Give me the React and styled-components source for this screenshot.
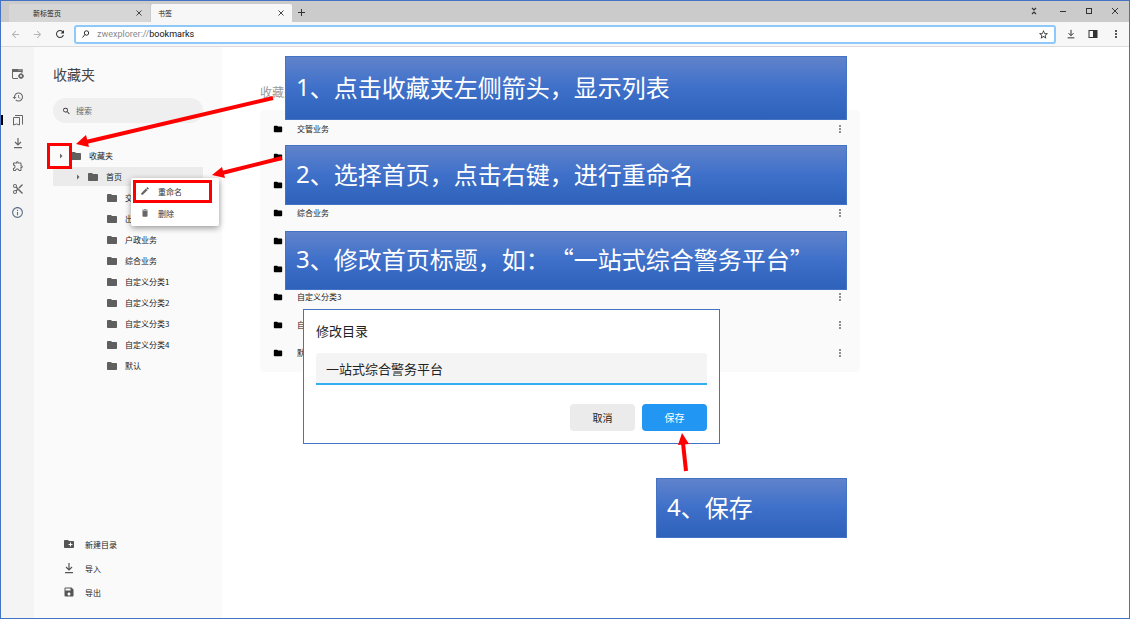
import React, { useState } from 'react';
import styled, { createGlobalStyle, css } from 'styled-components';
import {
  MdArrowBack,
  MdArrowForward,
  MdArrowRight,
  MdContentCut,
  MdCreateNewFolder,
  MdDelete,
  MdEdit,
  MdFolder,
  MdHistory,
  MdInfoOutline,
  MdMoreVert,
  MdOutlineExtension,
  MdRefresh,
  MdSave,
  MdSearch,
  MdStarBorder,
} from 'react-icons/md';

const folders = [
  '交管业务',
  '出入境业务',
  '户政业务',
  '综合业务',
  '自定义分类1',
  '自定义分类2',
  '自定义分类3',
  '自定义分类4',
  '默认',
];

const tree = [
  { name: '收藏夹', level: 0, open: true },
  { name: '首页', level: 1, open: true, selected: true },
  ...folders.map((name) => ({ name, level: 2 })),
];

const steps = [
  { no: '1', text: '、点击收藏夹左侧箭头，显示列表', x: 285, y: 56, w: 562, h: 64 },
  { no: '2', text: '、选择首页，点击右键，进行重命名', x: 285, y: 145, w: 562, h: 60 },
  { no: '3', text: '、修改首页标题，如：“一站式综合警务平台”', x: 285, y: 231, w: 562, h: 59 },
  { no: '4', text: '、保存', x: 656, y: 478, w: 191, h: 60 },
];

const DownloadIcon = ({ size = 12 }) => (
  <svg width={size} height={size} viewBox="0 0 12 12" fill="none" stroke="currentColor" strokeWidth="1.2">
    <path d="M6 1v7M3 5l3 3 3-3M2 10.6h8" />
  </svg>
);

const HomeIcon = () => (
  <svg width="12" height="12" viewBox="0 0 12 12" fill="none" stroke="currentColor">
    <path d="M6 10.5H1a.5.5 0 0 1-.5-.5V1.5h9.500V5" />
    <path d="M0 2.500h10.500" strokeWidth="3" />
    <path d="M6.500 2h1M8.500 2h1" stroke="#f4f4f4" />
    <circle cx="9" cy="8" r="1.800" strokeWidth="1.600" />
    <path d="M9 5v1M9 10v1M6 8h1M11 8h1" />
  </svg>
);

const BookmarksIcon = () => (
  <svg width="12" height="12" viewBox="0 0 12 12" fill="none" stroke="currentColor">
    <path d="M1.500 3.500h6v7.500l-3-1-3 1z" />
    <path d="M3 1.500h7.500v9" />
  </svg>
);

const PanelIcon = () => (
  <svg width="10" height="10" viewBox="0 0 10 10">
    <rect x="1" y="1.5" width="8" height="7" fill="none" stroke="currentColor" />
    <rect x="5" y="1.5" width="4" height="7" fill="currentColor" />
  </svg>
);

const CollapseIcon = () => (
  <svg width="8" height="8" viewBox="0 0 8 8" fill="none" stroke="currentColor" strokeWidth="1.2">
    <path d="M2 1l2 2 2-2M2 7l2-2 2 2" />
  </svg>
);

const KeyIcon = () => (
  <svg width="10" height="10" viewBox="0 0 10 10" fill="none" stroke="#333">
    <circle cx="5.5" cy="4" r="2.2" />
    <path d="M4 5.5L1.500 8.500" />
  </svg>
);

const CloseIcon = () => (
  <svg width="8" height="8" viewBox="0 0 8 8" stroke="currentColor" strokeWidth="0.9">
    <path d="M1.500 1.500l5 5M6.500 1.500l-5 5" />
  </svg>
);

const WindowIcon = ({ type }) => (
  <svg width="8" height="8" viewBox="0 0 8 8" fill="none" stroke="currentColor">
    {type === 'min' && <path d="M1 4.5h6" />}
    {type === 'max' && <rect x="1.5" y="1.5" width="5" height="5" />}
    {type === 'close' && <path d="M1 1l6 6M7 1L1 7" />}
  </svg>
);

const Arrows = () => (
  <ArrowLayer width="720" height="480" viewBox="0 0 720 480">
    <g stroke="#f00" strokeWidth="4">
      <path d="M273 98L86 142" />
      <path d="M282 158L222 173" />
      <path d="M686 471L683 443" />
    </g>
    <g fill="#f00">
      <path d="M76 144l10-9 3 12z" />
      <path d="M212 175l10-8 3 11z" />
      <path d="M682 433l-4 12 11-1z" />
    </g>
  </ArrowLayer>
);

export default function App() {
  const [title, setTitle] = useState('一站式综合警务平台');
  const [keyword, setKeyword] = useState('');

  return (
    <Page>
      <GlobalStyle />
      <Window>
        <TabBar>
          <Tab>
            <TabName $indent>新标签页</TabName>
            <IconButton aria-label="关闭标签">
              <CloseIcon />
            </IconButton>
          </Tab>
          <Tab $active>
            <TabName>书签</TabName>
            <IconButton aria-label="关闭标签">
              <CloseIcon />
            </IconButton>
          </Tab>
          <NewTab aria-label="新建标签">
            <svg width="8" height="8" viewBox="0 0 8 8" stroke="currentColor">
              <path d="M3.500 0v7M0 3.500h7" />
            </svg>
          </NewTab>
          <WindowButtons>
            <IconButton aria-label="收起">
              <CollapseIcon />
            </IconButton>
            <IconButton aria-label="最小化">
              <WindowIcon type="min" />
            </IconButton>
            <IconButton aria-label="最大化">
              <WindowIcon type="max" />
            </IconButton>
            <IconButton aria-label="关闭">
              <WindowIcon type="close" />
            </IconButton>
          </WindowButtons>
        </TabBar>

        <Toolbar>
          <NavButtons>
            <IconButton aria-label="后退" disabled>
              <MdArrowBack size={11} />
            </IconButton>
            <IconButton aria-label="前进" disabled>
              <MdArrowForward size={11} />
            </IconButton>
            <IconButton aria-label="刷新">
              <MdRefresh size={12} stroke="currentColor" />
            </IconButton>
          </NavButtons>
          <AddressBar>
            <KeyIcon />
            <Address>
              <span>zwexplorer://</span>bookmarks
            </Address>
            <IconButton aria-label="收藏">
              <MdStarBorder size={11} />
            </IconButton>
          </AddressBar>
          <ToolButtons>
            <IconButton aria-label="下载">
              <DownloadIcon size={10} />
            </IconButton>
            <IconButton aria-label="侧边栏">
              <PanelIcon />
            </IconButton>
            <IconButton aria-label="菜单">
              <MdMoreVert size={12} />
            </IconButton>
          </ToolButtons>
        </Toolbar>

        <Body>
          <Rail>
            <RailButton aria-label="主页">
              <HomeIcon />
            </RailButton>
            <RailButton aria-label="历史记录">
              <MdHistory size={12} />
            </RailButton>
            <RailButton aria-label="书签" $active>
              <BookmarksIcon />
            </RailButton>
            <RailButton aria-label="下载">
              <DownloadIcon />
            </RailButton>
            <RailButton aria-label="扩展">
              <MdOutlineExtension size={12} />
            </RailButton>
            <RailButton aria-label="截图">
              <MdContentCut size={12} />
            </RailButton>
            <RailButton aria-label="关于" $info>
              <MdInfoOutline size={13} />
            </RailButton>
          </Rail>

          <Sidebar>
            <SidebarTitle>收藏夹</SidebarTitle>
            <Search>
              <MdSearch size={10} stroke="currentColor" />
              <input
                aria-label="搜索"
                placeholder="搜索"
                value={keyword}
                onChange={(e) => setKeyword(e.target.value)}
              />
            </Search>
            <Tree>
              {tree.map((item) => (
                <TreeItem key={item.name} $level={item.level} $selected={item.selected}>
                  {item.open && (
                    <IconButton aria-label="展开">
                      <MdArrowRight size={12} color="#666" />
                    </IconButton>
                  )}
                  <MdFolder size={12} color="#5f5f5f" />
                  <span>{item.name}</span>
                </TreeItem>
              ))}
            </Tree>
            <Actions>
              <ActionButton>
                <MdCreateNewFolder size={12} />
                <span>新建目录</span>
              </ActionButton>
              <ActionButton>
                <DownloadIcon />
                <span>导入</span>
              </ActionButton>
              <ActionButton>
                <MdSave size={12} />
                <span>导出</span>
              </ActionButton>
            </Actions>
          </Sidebar>

          <Main>
            <MainTitle>收藏夹</MainTitle>
            <List>
              {folders.map((name) => (
                <ListItem key={name}>
                  <MdFolder size={10} color="#000" />
                  <span>{name}</span>
                  <IconButton aria-label="更多">
                    <MdMoreVert size={12} color="#777" />
                  </IconButton>
                </ListItem>
              ))}
            </List>
          </Main>
        </Body>

        <ContextMenu>
          <MenuButton>
            <MdEdit size={10} />
            重命名
          </MenuButton>
          <MenuButton>
            <MdDelete size={10} />
            删除
          </MenuButton>
        </ContextMenu>

        {steps.map((step) => (
          <Step key={step.no} $x={step.x} $y={step.y} $w={step.w} $h={step.h}>
            <b>{step.no}</b>
            {step.text}
          </Step>
        ))}

        <Dialog role="dialog" aria-labelledby="dialog-title">
          <DialogTitle id="dialog-title">修改目录</DialogTitle>
          <DialogInput
            aria-labelledby="dialog-title"
            value={title}
            onChange={(e) => setTitle(e.target.value)}
          />
          <DialogButtons>
            <DialogButton>取消</DialogButton>
            <DialogButton $primary>保存</DialogButton>
          </DialogButtons>
        </Dialog>

        <RedBox $x={47} $y={143} $w={25} $h={26} />
        <RedBox $x={133} $y={180} $w={79} $h={23} />
        <Arrows />
      </Window>
    </Page>
  );
}

const GlobalStyle = createGlobalStyle`
  * {
    box-sizing: border-box;
  }
  body {
    margin: 0;
    background: #fff;
  }
  body, button, input {
    font-family: 'Noto Sans CJK SC', sans-serif;
    font-size: 8px;
    color: #222;
  }
`;

const Page = styled.div`
  display: flex;
  min-height: 100vh;
  padding: 0 1px 1px 0;
`;

const Window = styled.div`
  position: relative;
  display: flex;
  flex-direction: column;
  flex: 1;
  border: 1px solid #4472c4;
`;

const IconButton = styled.button`
  display: flex;
  align-items: center;
  justify-content: center;
  padding: 0;
  border: none;
  background: transparent;
  color: #333;
  &:disabled {
    color: #b5b5b5;
  }
`;

const TabBar = styled.div`
  display: flex;
  align-items: flex-end;
  gap: 1px;
  height: 21px;
  padding-left: 8px;
  background: #cbcbcb;
`;

const Tab = styled.div`
  display: flex;
  align-items: center;
  justify-content: space-between;
  width: 141px;
  height: 18px;
  padding: 0 7px;
  border-radius: 2px 2px 0 0;
  background: ${(props) => (props.$active ? '#f7f7f7' : '#d6d6d6')};
`;

const TabName = styled.span`
  font-size: 7px;
  padding-left: ${(props) => (props.$indent ? '17px' : '0')};
`;

const NewTab = styled(IconButton)`
  width: 18px;
  height: 18px;
`;

const WindowButtons = styled.div`
  display: flex;
  align-self: center;
  gap: 18px;
  margin-left: auto;
  padding: 0 10px 2px 0;
  button:first-child {
    margin-right: 3px;
  }
`;

const Toolbar = styled.div`
  display: flex;
  align-items: center;
  height: 25px;
  background: #f7f7f7;
  border-bottom: 1px solid #dcdcdc;
`;

const NavButtons = styled.div`
  display: flex;
  gap: 11px;
  padding: 0 8px 0 9px;
`;

const AddressBar = styled.div`
  display: flex;
  align-items: center;
  flex: 1;
  gap: 6px;
  height: 19px;
  padding: 0 5px;
  border: 2px solid #8fc9f9;
  border-radius: 3px;
  background: #fff;
`;

const Address = styled.div`
  flex: 1;
  font-family: Roboto, 'Noto Sans CJK SC', sans-serif;
  font-size: 9px;
  line-height: 14px;
  color: #111;
  span {
    color: #8a8a8a;
  }
`;

const ToolButtons = styled.div`
  display: flex;
  gap: 12px;
  padding: 0 7px 0 10px;
`;

const Body = styled.div`
  display: flex;
  flex: 1;
`;

const Rail = styled.nav`
  display: flex;
  flex-direction: column;
  gap: 3px;
  width: 33px;
  padding-top: 17px;
  background: #f4f4f4;
`;

const RailButton = styled(IconButton)`
  width: 100%;
  height: 20px;
  color: ${(props) => (props.$info ? '#5f6f88' : '#666')};
  ${(props) =>
    props.$active &&
    css`
      background: linear-gradient(#000, #000) left center / 2px 10px no-repeat;
    `}
`;

const Sidebar = styled.aside`
  display: flex;
  flex-direction: column;
  width: 188px;
  padding: 17px 19px 14px;
  background: #fafafa;
`;

const SidebarTitle = styled.h1`
  margin: 0;
  font-size: 14px;
  font-weight: 400;
  line-height: 20px;
  color: #444;
`;

const Search = styled.label`
  display: flex;
  align-items: center;
  gap: 5px;
  height: 25px;
  margin-top: 14px;
  padding: 0 9px;
  border-radius: 13px;
  background: #efefef;
  input {
    width: 100%;
    padding: 0;
    border: none;
    outline: none;
    background: transparent;
  }
  input::placeholder {
    color: #666;
  }
`;

const Tree = styled.ul`
  margin: 23px 0 0;
  padding: 0;
  list-style: none;
`;

const TreeItem = styled.li`
  display: flex;
  align-items: center;
  height: 19px;
  margin-bottom: 2px;
  padding-left: ${(props) => [2, 19, 53][props.$level]}px;
  background: ${(props) => (props.$selected ? '#ebebeb' : 'transparent')};
  button {
    margin-right: 3px;
  }
  span {
    margin-left: 7px;
  }
`;

const Actions = styled.div`
  display: flex;
  flex-direction: column;
  margin-top: auto;
`;

const ActionButton = styled(IconButton)`
  justify-content: flex-start;
  gap: 10px;
  height: 24px;
  padding-left: 10px;
  color: #555;
  span {
    color: #222;
  }
`;

const Main = styled.main`
  flex: 1;
  padding: 36px 269px 0 38px;
`;

const MainTitle = styled.h2`
  margin: 0;
  font-size: 12px;
  font-weight: 400;
  line-height: 18px;
  color: #999;
`;

const List = styled.ul`
  margin: 9px 0 0;
  padding: 5px 14px 5px 13px;
  border-radius: 4px;
  background: #fafafa;
  list-style: none;
`;

const ListItem = styled.li`
  display: flex;
  align-items: center;
  height: 28px;
  span {
    flex: 1;
    margin-left: 14px;
    padding-bottom: 2px;
  }
`;

const ContextMenu = styled.div`
  position: absolute;
  left: 130px;
  top: 177px;
  width: 88px;
  padding: 2px 0;
  border-radius: 2px;
  background: #fff;
  box-shadow: 0 2px 6px rgba(0, 0, 0, 0.4);
`;

const MenuButton = styled(IconButton)`
  justify-content: flex-start;
  gap: 8px;
  width: 100%;
  height: 22px;
  padding-left: 9px;
  svg {
    color: #666;
  }
`;

const Step = styled.div`
  position: absolute;
  left: ${(props) => props.$x - 1}px;
  top: ${(props) => props.$y - 1}px;
  display: flex;
  align-items: center;
  width: ${(props) => props.$w}px;
  height: ${(props) => props.$h}px;
  padding: 0 0 4px 10px;
  border: 1px solid #4472c4;
  background: linear-gradient(#6083cb, #3e70ca 50%, #2e61ba);
  font-size: 24px;
  white-space: nowrap;
  text-spacing-trim: space-all;
  color: #fff;
  b {
    font-family: 'Noto Sans', sans-serif;
    font-weight: 400;
  }
`;

const Dialog = styled.div`
  position: absolute;
  left: 302px;
  top: 308px;
  width: 417px;
  padding: 12px;
  border: 1px solid #4472c4;
  background: #fff;
`;

const DialogTitle = styled.h3`
  margin: 0;
  font-size: 13px;
  font-weight: 400;
  line-height: 18px;
`;

const DialogInput = styled.input`
  display: block;
  width: 100%;
  height: 32px;
  margin-top: 13px;
  padding: 0 10px;
  border: none;
  border-bottom: 2px solid #33aef5;
  border-radius: 3px 3px 0 0;
  background: #f4f4f4;
  font-size: 13px;
  outline: none;
`;

const DialogButtons = styled.div`
  display: flex;
  justify-content: flex-end;
  gap: 7px;
  margin-top: 19px;
`;

const DialogButton = styled.button`
  width: 65px;
  height: 27px;
  padding: 0;
  border: none;
  border-radius: 4px;
  background: ${(props) => (props.$primary ? '#2196f3' : '#ebebeb')};
  color: ${(props) => (props.$primary ? '#fff' : '#222')};
  font-size: 10px;
`;

const RedBox = styled.div`
  position: absolute;
  left: ${(props) => props.$x - 1}px;
  top: ${(props) => props.$y - 1}px;
  width: ${(props) => props.$w}px;
  height: ${(props) => props.$h}px;
  border: 3px solid #f00;
  pointer-events: none;
`;

const ArrowLayer = styled.svg`
  position: absolute;
  left: -1px;
  top: -1px;
  pointer-events: none;
`;
